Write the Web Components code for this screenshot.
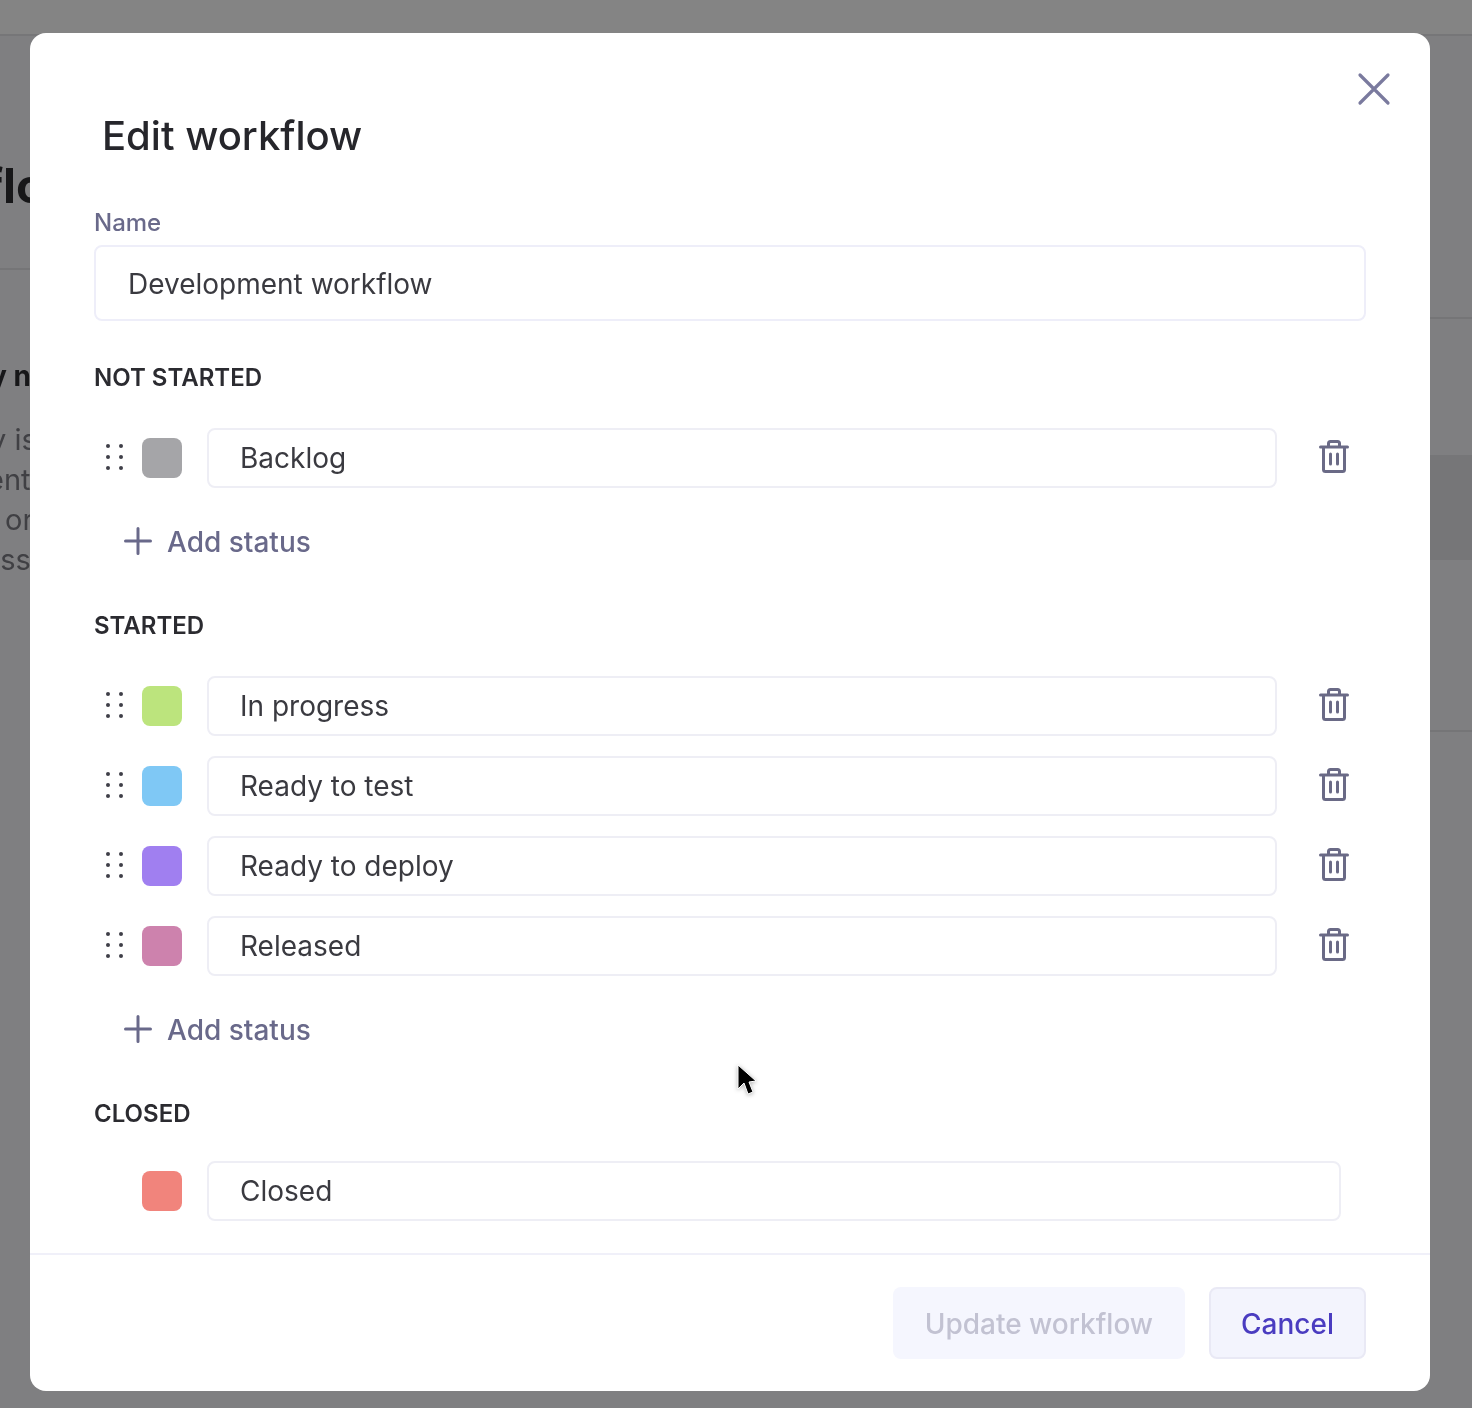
<!DOCTYPE html>
<html><head><meta charset="utf-8"><style>
html,body{margin:0;padding:0;height:1408px;overflow:hidden;background:#808080;font-family:Inter,"Liberation Sans",sans-serif}
</style></head><body>
<template id="t-backdrop"><style>
:host{display:block;position:relative;width:1472px;height:1408px;background:#7f7f81;overflow:hidden;filter:blur(.5px)}
.top{position:absolute;left:0;top:0;width:1472px;height:34px;background:#848484;border-bottom:2px solid #767678}
.frag{position:absolute;white-space:nowrap;color:#404044;font-size:29px;line-height:40px}
.b{font-weight:700;color:#171719}
.line{position:absolute;height:2px;background:#757577}
.block{position:absolute;left:1430px;width:42px;top:455px;height:105px;background:#767678}
</style>
<div class="top"></div>
<div class="line" style="left:0;width:30px;top:268px"></div>
<div class="line" style="left:1430px;width:42px;top:317px"></div>
<div class="line" style="left:1430px;width:42px;top:730px"></div>
<div class="block"></div>
<span class="frag b" style="left:-16px;top:160px;font-size:48px;line-height:52px">flo</span>
<span class="frag b" style="left:-10px;top:356px;font-size:28px">y n</span>
<span class="frag" style="left:-10px;top:420px">y is</span>
<span class="frag" style="left:-13px;top:460px">ent</span>
<span class="frag" style="left:5px;top:500px">or</span>
<span class="frag" style="left:-16px;top:540px">ass</span>
<slot></slot></template>

<template id="t-modal"><style>
:host{display:flex;flex-direction:column;position:absolute;left:30px;top:33px;width:1400px;height:1358px;background:#fff;border-radius:16px;overflow:hidden;box-sizing:border-box}
.body{flex:1;padding:79px 64px 0;display:flex;flex-direction:column;min-height:0}
h2{margin:0 0 48px 8px;font-size:40px;line-height:48px;font-weight:500;color:#26262b;letter-spacing:0}
.close{position:absolute;left:1326px;top:38px;width:36px;height:36px}
footer{border-top:2px solid #f0f0f9;height:138px;flex:none;box-sizing:border-box;display:flex;justify-content:flex-end;align-items:flex-start;gap:24px;padding:32px 64px 0}
</style>
<svg class="close" viewBox="0 0 36 36" fill="none" stroke="#7a7a9e" stroke-width="3.2" stroke-linecap="round"><path d="M4 4 32 32M32 4 4 32"/></svg>
<div class="body"><h2>Edit workflow</h2><slot></slot></div>
<footer><slot name="footer"></slot></footer></template>

<template id="t-name"><style>
:host{display:block;margin-bottom:41px}
label{display:block;font-size:24px;line-height:32px;font-weight:500;color:#69698a;margin-bottom:6px;margin-top:-1px}
.f{height:76px;box-sizing:border-box;border:2px solid #eeeef9;border-radius:8px;padding:2px 32px 0;display:flex;align-items:center;font-size:28px;color:#3a3a40}
</style><label><slot name="label"></slot></label><div class="f"><slot></slot></div></template>

<template id="t-group"><style>
:host{display:block;margin-bottom:51px}
h3{margin:0 0 34px;font-size:24px;line-height:32px;font-weight:600;color:#2b2b30}
:host([noadd]) h3{margin-bottom:31px}
.rows{display:flex;flex-direction:column;gap:20px}
.add{display:flex;align-items:center;gap:14px;margin:35px 0 0 29px;height:36px;font-size:28px;color:#69698a;font-weight:500}
.add span{margin-top:2px}
svg{width:30px;height:30px;flex:none}
:host([noadd]) .add{display:none}
</style><h3><slot name="title"></slot></h3><div class="rows"><slot></slot></div>
<div class="add"><svg viewBox="0 0 30 30" fill="none" stroke="#69698a" stroke-width="3" stroke-linecap="round"><path d="M15 2.500v25M2.500 15h25"/></svg><span>Add status</span></div></template>

<template id="t-row"><style>
:host{display:flex;align-items:center;height:60px}
.drag{width:48px;flex:none;display:flex;justify-content:flex-start;padding-left:11px;margin-top:-2px;box-sizing:border-box}
.drag svg{width:18px;height:28px;display:block}
.sw{width:40px;height:40px;border-radius:8px;flex:none;background:var(--c);margin:-1px 25px 0 0}
.f{height:60px;box-sizing:border-box;flex:1;border:2px solid #eeeef5;border-radius:8px;padding:0 31px;display:flex;align-items:center;font-size:28px;color:#3a3a40}
.del{flex:none;width:89px;display:flex;justify-content:flex-end;padding-right:17px;margin-top:-4px;box-sizing:border-box}
.del svg{width:30px;height:33px}
:host([locked]) .drag svg{visibility:hidden}
:host([locked]) .del{width:25px;padding:0}
:host([locked]) .del svg{display:none}
</style>
<div class="drag"><svg viewBox="0 0 18 28" fill="#3f3f48"><circle cx="3" cy="3" r="2"/><circle cx="16" cy="3" r="2"/><circle cx="3" cy="14" r="2"/><circle cx="16" cy="14" r="2"/><circle cx="3" cy="25" r="2"/><circle cx="16" cy="25" r="2"/></svg></div>
<div class="sw"></div>
<div class="f"><slot></slot></div>
<div class="del"><svg viewBox="0 0 30 33" fill="none" stroke="#6a6a86" stroke-width="3" stroke-linejoin="round" stroke-linecap="round"><path d="M1.500 7h27M4.500 7v22.500a2 2 0 0 0 2 2h17a2 2 0 0 0 2-2V7M9.500 7V3.500a2 2 0 0 1 2-2h7a2 2 0 0 1 2 2V7M11.500 14v10M18.500 14v10"/></svg></div>
</template>

<template id="t-btn"><style>
:host{display:flex;align-items:center;justify-content:center;height:72px;box-sizing:border-box;border-radius:8px;font-size:28px;font-weight:500;background:#f3f4fd;border:2px solid #e9e9f5;color:#4a3cc0;padding:2px 30px 0}
:host([disabled]){border-color:transparent;color:#c2c2d2;background:#f5f6fe}
</style><slot></slot></template>

<template id="t-cursor"><style>
:host{display:block;position:absolute;left:736px;top:1064px;width:20px;height:34px}
svg{width:20px;height:34px;display:block;filter:drop-shadow(0 1px 2px rgba(0,0,0,.3))}
</style><svg viewBox="0 0 20 34"><path d="M2 1v24l6-6 4 11 5-2-4-10 7-1z" fill="#000" stroke="#fff" stroke-width="1"/></svg></template>

<wf-backdrop>
<wf-modal>
<wf-name><span slot="label">Name</span>Development workflow</wf-name>
<wf-group><span slot="title">NOT STARTED</span>
<wf-row style="--c:#a5a5a8">Backlog</wf-row></wf-group>
<wf-group><span slot="title">STARTED</span>
<wf-row style="--c:#bce47d">In progress</wf-row>
<wf-row style="--c:#7fc8f5">Ready to test</wf-row>
<wf-row style="--c:#a07ff0">Ready to deploy</wf-row>
<wf-row style="--c:#cd82ad">Released</wf-row></wf-group>
<wf-group noadd><span slot="title">CLOSED</span>
<wf-row locked style="--c:#f1847c">Closed</wf-row></wf-group>
<wf-btn slot="footer" disabled>Update workflow</wf-btn>
<wf-btn slot="footer">Cancel</wf-btn>
</wf-modal>
<wf-cursor></wf-cursor>
</wf-backdrop>
<script>
const defs={'wf-backdrop':'t-backdrop','wf-modal':'t-modal','wf-name':'t-name','wf-group':'t-group','wf-row':'t-row','wf-btn':'t-btn','wf-cursor':'t-cursor'};
for(const [n,t] of Object.entries(defs)){
  customElements.define(n,class extends HTMLElement{constructor(){super();this.attachShadow({mode:'open'}).appendChild(document.getElementById(t).content.cloneNode(true));}});
}
</script>
</body></html>
